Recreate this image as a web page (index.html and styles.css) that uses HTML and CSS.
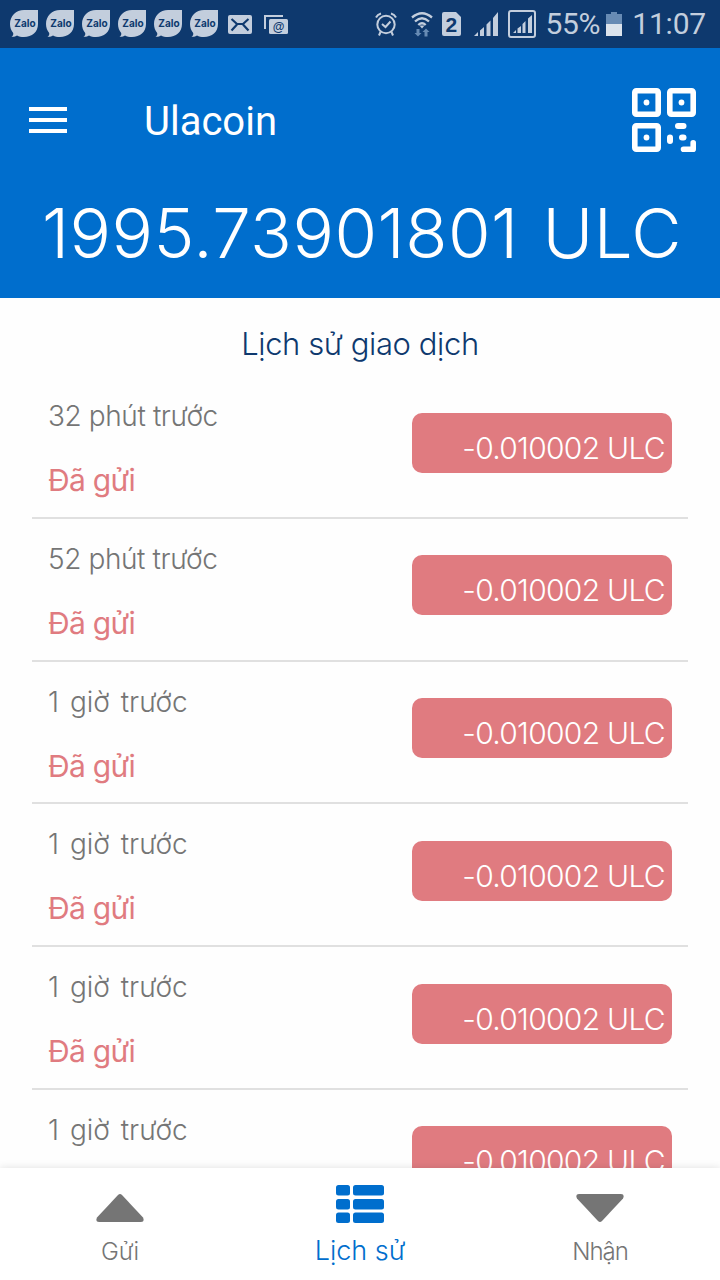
FILE: index.html
```html
<!DOCTYPE html>
<html lang="vi">
<head>
    <meta charset="utf-8">
    <title>Ulacoin</title>
    <link rel="stylesheet" href="styles.css">
</head>
<body>
    <svg class="defs" width="0" height="0">
        <symbol id="zalo" viewBox="0 0 28 28">
            <path d="M14 0h14v14c0 8-6 13-14 13-3 0-5-.5-7-1.500-1.500 1-3.500 1.500-5.500 1.200 1.500-.8 2-2 1.700-3.700C1.200 20.500 0 17.500 0 14 0 6 6 0 14 0z" fill="#c3cedd"/>
            <text x="15" y="17" class="zalo-text">Zalo</text>
        </symbol>
    </svg>

    <div class="statusbar">
        <div class="notifications">
            <svg width="28" height="28"><use href="#zalo"/></svg>
            <svg width="28" height="28"><use href="#zalo"/></svg>
            <svg width="28" height="28"><use href="#zalo"/></svg>
            <svg width="28" height="28"><use href="#zalo"/></svg>
            <svg width="28" height="28"><use href="#zalo"/></svg>
            <svg width="28" height="28"><use href="#zalo"/></svg>
            <svg class="mail" width="24" height="19" viewBox="0 0 24 19">
                <rect width="24" height="19" rx="2" fill="#c3cedd"/>
                <path d="M3.500 4l5.500 5h6l5.500-5M3.500 15.500L9 9.500M20.500 15.500L15 9.500" fill="none" stroke="#0e396e" stroke-width="2.200"/>
            </svg>
            <svg class="inbox" width="24" height="19" viewBox="0 0 24 19">
                <path d="M1 14V1h18" fill="none" stroke="#c3cedd" stroke-width="2"/>
                <rect x="5" y="4" width="19" height="15" rx="1.500" fill="#c3cedd"/>
                <text x="14.500" y="15.500" class="at-text">@</text>
            </svg>
        </div>
        <div class="system">
            <svg width="22" height="26" viewBox="0 0 22 26">
                <g fill="none" stroke="#c3cedd" stroke-width="2">
                    <circle cx="11" cy="13.500" r="8.700"/>
                    <path d="M1 6.500Q2.500 3.500 6 2.500M21 6.500Q19.500 3.500 16 2.500M5.500 21L4 24.500M16.500 21l1.500 3.500"/>
                    <path d="M7 13l3.500 3 5-5.500"/>
                </g>
            </svg>
            <svg class="wifi" width="22" height="26" viewBox="0 0 22 26">
                <g fill="none" stroke="#c3cedd" stroke-width="2.300">
                    <path d="M1 6.500Q11-2 21 6.500M4 10.500Q11 4 18 10.500M7.300 14Q11 10.500 14.700 14"/>
                </g>
                <path d="M8.500 14.500h5L11 17.500z" fill="#c3cedd"/>
                <path d="M5.500 18h3v4h2L7 25.500 3.500 22h2zM13.500 25.500h3V21h2L15 17.500 11.500 21h2z" fill="#678bb4"/>
            </svg>
            <svg class="sim" width="19" height="24" viewBox="0 0 19 24">
                <path d="M2 0h12l5 5v17q0 2-2 2H2q-2 0-2-2V2q0-2 2-2z" fill="#c3cedd"/>
                <text x="9.300" y="19.500" class="sim-text">2</text>
            </svg>
            <svg class="signal" width="24" height="24" viewBox="0 0 24 24">
                <path d="M0 24l4-4v4zM6 18.500l4-3.500v9H6zM12.500 12.500l4-4V24h-4zM19 6l5-6v24h-5z" fill="#c3cedd"/>
            </svg>
            <svg class="signal-box" width="28" height="28" viewBox="0 0 28 28">
                <rect x="1" y="1" width="26" height="26" rx="2" fill="none" stroke="#c3cedd" stroke-width="2"/>
                <path d="M5 23l3-3v3zM9.500 18.500L13 16v7H9.500zM14.500 14l3-3v12h-3zM20 8.500L24 5v18h-4z" fill="#c3cedd"/>
            </svg>
            <span class="percent">55%</span>
            <svg class="battery" width="16" height="24" viewBox="0 0 16 24">
                <path d="M0 2h5V0h6v2h5v10H0z" fill="#678bb4"/>
                <rect y="12" width="16" height="12" fill="#dbe3ec"/>
            </svg>
            <span class="clock">11:07</span>
        </div>
    </div>

    <header>
        <div class="toolbar">
            <div class="menu"><i></i><i></i><i></i></div>
            <div class="title">Ulacoin</div>
            <svg class="qr" width="64" height="64" viewBox="0 0 64 64">
                <g fill="none" stroke="#fff" stroke-width="5.600">
                    <rect x="2.800" y="2.800" width="23.400" height="23.400" rx="1.500"/>
                    <rect x="37.800" y="2.800" width="23.400" height="23.400" rx="1.500"/>
                    <rect x="2.800" y="37.800" width="23.400" height="23.400" rx="1.500"/>
                </g>
                <g fill="#fff">
                    <circle cx="14.500" cy="14.500" r="2.900"/>
                    <circle cx="49.500" cy="14.500" r="2.900"/>
                    <circle cx="14.500" cy="49.500" r="2.900"/>
                    <rect x="43" y="35" width="11.500" height="6" rx="3"/>
                    <rect x="35" y="46.500" width="6" height="9.500" rx="3"/>
                    <rect x="47" y="46.500" width="7.500" height="6" rx="3"/>
                </g>
                <path d="M51.500 61.200h9.700v-6.500" fill="none" stroke="#fff" stroke-width="5.600" stroke-linecap="round" stroke-linejoin="round"/>
            </svg>
        </div>
        <div class="balance">1995.73901801 ULC</div>
    </header>

    <main>
        <h1>Lịch sử giao dịch</h1>
        <div class="row">
            <div class="info">
                <div class="time">32 phút trước</div>
                <div class="status">Đã gửi</div>
            </div>
            <div class="amount">-0.010002 ULC</div>
        </div>
        <div class="row">
            <div class="info">
                <div class="time">52 phút trước</div>
                <div class="status">Đã gửi</div>
            </div>
            <div class="amount">-0.010002 ULC</div>
        </div>
        <div class="row">
            <div class="info">
                <div class="time hours">1 giờ trước</div>
                <div class="status">Đã gửi</div>
            </div>
            <div class="amount">-0.010002 ULC</div>
        </div>
        <div class="row">
            <div class="info">
                <div class="time hours">1 giờ trước</div>
                <div class="status">Đã gửi</div>
            </div>
            <div class="amount">-0.010002 ULC</div>
        </div>
        <div class="row">
            <div class="info">
                <div class="time hours">1 giờ trước</div>
                <div class="status">Đã gửi</div>
            </div>
            <div class="amount">-0.010002 ULC</div>
        </div>
        <div class="row">
            <div class="info">
                <div class="time hours">1 giờ trước</div>
            </div>
            <div class="amount">-0.010002 ULC</div>
        </div>
    </main>

    <nav>
        <div class="tab">
            <svg width="48" height="40" viewBox="0 0 48 40">
                <path d="M22 11q2-2 4 0l21 22.500q2 4.500-2 4.500H3q-4 0-2-4.500z" fill="#757575"/>
            </svg>
            <span>Gửi</span>
        </div>
        <div class="tab active">
            <svg width="48" height="40" viewBox="0 0 48 40">
                <g fill="#006ecd">
                    <rect y="1" width="14" height="10.500" rx="2.500"/>
                    <rect x="17" y="1" width="31" height="10.500" rx="2.500"/>
                    <rect y="15" width="14" height="10.500" rx="2.500"/>
                    <rect x="17" y="15" width="31" height="10.500" rx="2.500"/>
                    <rect y="28.500" width="14" height="10.500" rx="2.500"/>
                    <rect x="17" y="28.500" width="31" height="10.500" rx="2.500"/>
                </g>
            </svg>
            <span>Lịch sử</span>
        </div>
        <div class="tab receive">
            <svg width="48" height="40" viewBox="0 0 48 40">
                <path d="M22 37q2 2 4 0l21-22.500q2-4.500-2-4.500H3q-4 0-2 4.500z" fill="#757575"/>
            </svg>
            <span>Nhận</span>
        </div>
    </nav>
</body>
</html>
```
FILE: styles.css
```css
* {
    box-sizing: border-box;
}
body {
    margin: 0;
    height: 1280px;
    overflow: hidden;
    display: flex;
    flex-direction: column;
    background: #fefefe;
    font-family: Inter, "Liberation Sans", sans-serif;
    font-weight: 300;
}
svg {
    display: block;
    flex: none;
}
.defs {
    position: absolute;
}
.statusbar {
    height: 48px;
    flex: none;
    display: flex;
    justify-content: space-between;
    background: #0e396e;
    color: #c3cedd;
    font: 400 30px/50px Roboto, sans-serif;
}
.notifications {
    display: flex;
    align-items: center;
    gap: 8px;
    padding-left: 10px;
}
.mail {
    margin-left: 2px;
}
.inbox {
    margin-left: 4px;
}
.zalo-text {
    font: 700 10px Inter, sans-serif;
    fill: #0e396e;
    text-anchor: middle;
}
.at-text {
    font: 700 12px "Liberation Sans", sans-serif;
    fill: #0e396e;
    text-anchor: middle;
}
.sim-text {
    font: 700 21px "Liberation Sans", sans-serif;
    fill: #0e396e;
    text-anchor: middle;
}
.system {
    display: flex;
    align-items: center;
    padding-right: 14px;
}
.wifi {
    margin-left: 14px;
}
.sim {
    margin-left: 9px;
}
.signal {
    margin-left: 13px;
}
.signal-box {
    margin-left: 10px;
}
.percent {
    margin-left: 9px;
    letter-spacing: -0.3px;
}
.battery {
    margin-left: 6px;
}
.clock {
    margin-left: 10px;
    letter-spacing: -0.2px;
}
header {
    height: 250px;
    flex: none;
    background: #006ecd;
    color: #fff;
}
.toolbar {
    display: flex;
    align-items: center;
    height: 144px;
    padding: 0 24px 0 29px;
}
.menu {
    width: 38px;
    display: grid;
    gap: 7px;
}
.menu i {
    height: 4px;
    background: #fff;
}
.title {
    flex: 1;
    margin-left: 77px;
    padding-top: 3px;
    font: 400 40px/48px Roboto, sans-serif;
}
.balance {
    padding-left: 4px;
    text-align: center;
    white-space: nowrap;
    font-size: 69px;
    font-weight: 270;
    line-height: 83px;
    letter-spacing: 0.5px;
    word-spacing: 4px;
}
main {
    flex: 1;
    min-height: 0;
    overflow: hidden;
    padding: 0 32px;
}
h1 {
    margin: 0;
    height: 78px;
    padding-top: 26px;
    text-align: center;
    font-size: 31px;
    line-height: 40px;
    font-weight: 300;
    letter-spacing: -0.4px;
    color: #0e396e;
}
.row {
    display: flex;
    justify-content: space-between;
    align-items: flex-start;
    height: 142.75px;
    padding: 0 16px;
    border-bottom: 2px solid #e0e0e0;
}
.time {
    margin-top: 20px;
    font-size: 28px;
    line-height: 40px;
    letter-spacing: -0.4px;
    color: #757575;
}
.hours {
    letter-spacing: 0;
    word-spacing: 3px;
}
.status {
    margin-top: 24px;
    font-size: 30px;
    line-height: 40px;
    font-weight: 400;
    letter-spacing: -0.7px;
    color: #e07b80;
}
.amount {
    width: 260px;
    height: 60px;
    margin-top: 36.6px;
    padding: 9px 7px 0 0;
    border-radius: 10px;
    background: #e07b80;
    color: #fff;
    text-align: right;
    font-size: 30px;
    line-height: 52px;
    letter-spacing: -0.7px;
    white-space: nowrap;
}
nav {
    position: relative;
    height: 112px;
    flex: none;
    display: flex;
    background: #fff;
    box-shadow: 0 0 8px rgba(0, 0, 0, 0.12);
}
.tab {
    flex: 1;
    display: flex;
    flex-direction: column;
    align-items: center;
    padding-top: 16px;
    font-size: 24px;
    line-height: 32px;
    color: #757575;
}
.tab span {
    margin-top: 12px;
}
.active {
    color: #006ecd;
    font-size: 27px;
}
.active span {
    margin-top: 11px;
}
.receive {
    letter-spacing: -1px;
}
```
